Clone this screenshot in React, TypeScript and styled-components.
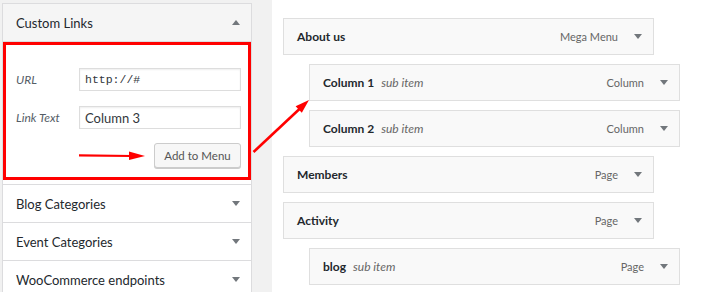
import styled, { createGlobalStyle } from "styled-components";

const GlobalStyle = createGlobalStyle`
  body {
    margin: 0;
    background: #f1f1f1;
    font-family: Lato, "Noto Sans", sans-serif;
  }
`;

const Page = styled.div`
  position: relative;
  width: 708px;
  height: 292px;
  overflow: hidden;
  box-sizing: border-box;
  padding-left: 2px;
  display: grid;
  grid-template-columns: 250px 1fr;
  column-gap: 20px;
`;

const Sidebar = styled.div`
  margin-top: 3px;
  background: #fff;
  border: 1px solid #dcdcde;
  border-bottom: none;
  align-self: start;
`;

const SectionTitle = styled.div<{ $open?: boolean }>`
  height: 37px;
  display: flex;
  align-items: center;
  justify-content: space-between;
  padding: 0 11px 0 13px;
  font-size: 13px;
  color: #23282d;
  background: ${(p) => (p.$open ? "#f5f5f5" : "#fff")};
  border-bottom: ${(p) => (p.$open ? "1px solid #dcdcde" : "none")};
  border-top: ${(p) => (p.$open ? "none" : "1px solid #dcdcde")};
`;

const SectionBody = styled.div`
  padding-bottom: 4px;
`;

const RedBox = styled.div`
  border: 3px solid #f00;
  padding: 23px 7px 9px 10px;
`;

const FieldRow = styled.div`
  display: grid;
  grid-template-columns: 63px 1fr;
  align-items: center;
  & + & {
    margin-top: 15px;
  }
`;

const Label = styled.label`
  font-size: 12px;
  font-style: italic;
  color: #555d66;
`;

const Input = styled.input<{ $mono?: boolean }>`
  height: 23px;
  box-sizing: border-box;
  width: 100%;
  border: 1px solid #ddd;
  box-shadow: inset 0 1px 2px rgba(0, 0, 0, 0.07);
  padding: 0 5px;
  font-family: ${(p) => (p.$mono ? '"Liberation Mono", monospace' : "Lato, sans-serif")};
  font-size: ${(p) => (p.$mono ? "11.5px" : "13px")};
  color: #32373c;
  outline: none;
`;

const ButtonRow = styled.div`
  display: flex;
  justify-content: flex-end;
  margin-top: 14px;
`;

const Button = styled.button`
  height: 25px;
  width: 87px;
  padding: 0;
  font-family: Lato, sans-serif;
  font-size: 11.5px;
  color: #555;
  background: #f7f7f7;
  border: 1px solid #ccc;
  border-radius: 3px;
  box-shadow: 0 1px 0 #ccc;
`;

const Caret = styled.span<{ $up?: boolean }>`
  width: 0;
  height: 0;
  border-left: 4px solid transparent;
  border-right: 4px solid transparent;
  ${(p) =>
    p.$up ? "border-bottom: 5px solid #72777c;" : "border-top: 5px solid #72777c;"}
`;

const MenuArea = styled.div`
  background: #fff;
  padding: 18px 0 0 11px;
`;

const MenuItem = styled.div<{ $depth: number }>`
  width: 371px;
  height: 37px;
  box-sizing: border-box;
  margin: 0 0 9px ${(p) => p.$depth * 26}px;
  border: 1px solid #dfdfdf;
  background: #f9f9f9;
  display: flex;
  align-items: center;
  padding: 0 11px 0 13px;
`;

const ItemTitle = styled.span`
  font-size: 12px;
  font-weight: 700;
  color: #23282d;
`;

const SubNote = styled.span`
  margin-left: 7px;
  font-size: 12px;
  font-style: italic;
  color: #666;
`;

const ItemType = styled.span`
  margin-left: auto;
  margin-right: 16px;
  font-size: 11px;
  color: #666;
`;

const Overlay = styled.svg`
  position: absolute;
  left: 0;
  top: 0;
  pointer-events: none;
`;

const menu = [
  { title: "About us", type: "Mega Menu", depth: 0 },
  { title: "Column 1", type: "Column", depth: 1, sub: true },
  { title: "Column 2", type: "Column", depth: 1, sub: true },
  { title: "Members", type: "Page", depth: 0 },
  { title: "Activity", type: "Page", depth: 0 },
  { title: "blog", type: "Page", depth: 1, sub: true },
];

const closed = ["Blog Categories", "Event Categories", "WooCommerce endpoints"];

function App() {
  return (
    <>
      <GlobalStyle />
      <Page>
        <Sidebar>
          <SectionTitle $open>
            Custom Links
            <Caret $up />
          </SectionTitle>
          <SectionBody>
            <RedBox>
              <FieldRow>
                <Label>URL</Label>
                <Input $mono defaultValue="http://#" />
              </FieldRow>
              <FieldRow>
                <Label>Link Text</Label>
                <Input defaultValue="Column 3" />
              </FieldRow>
              <ButtonRow>
                <Button>Add to Menu</Button>
              </ButtonRow>
            </RedBox>
          </SectionBody>
          {closed.map((t) => (
            <SectionTitle key={t}>
              {t}
              <Caret />
            </SectionTitle>
          ))}
        </Sidebar>
        <MenuArea>
          {menu.map((m) => (
            <MenuItem key={m.title} $depth={m.depth}>
              <ItemTitle>{m.title}</ItemTitle>
              {m.sub && <SubNote>sub item</SubNote>}
              <ItemType>{m.type}</ItemType>
              <Caret />
            </MenuItem>
          ))}
        </MenuArea>
        <Overlay width="708" height="292" viewBox="0 0 708 292">
          <line x1="79" y1="155.3" x2="132" y2="156" stroke="#f00" strokeWidth="2.2" />
          <polygon points="129,151.5 145,156 129,160" fill="#f00" />
          <line x1="253.5" y1="152" x2="300" y2="108.5" stroke="#f00" strokeWidth="2.6" />
          <polygon points="309,100 301.8,112.8 295.6,106.2" fill="#f00" />
        </Overlay>
      </Page>
    </>
  );
}

export default App;
